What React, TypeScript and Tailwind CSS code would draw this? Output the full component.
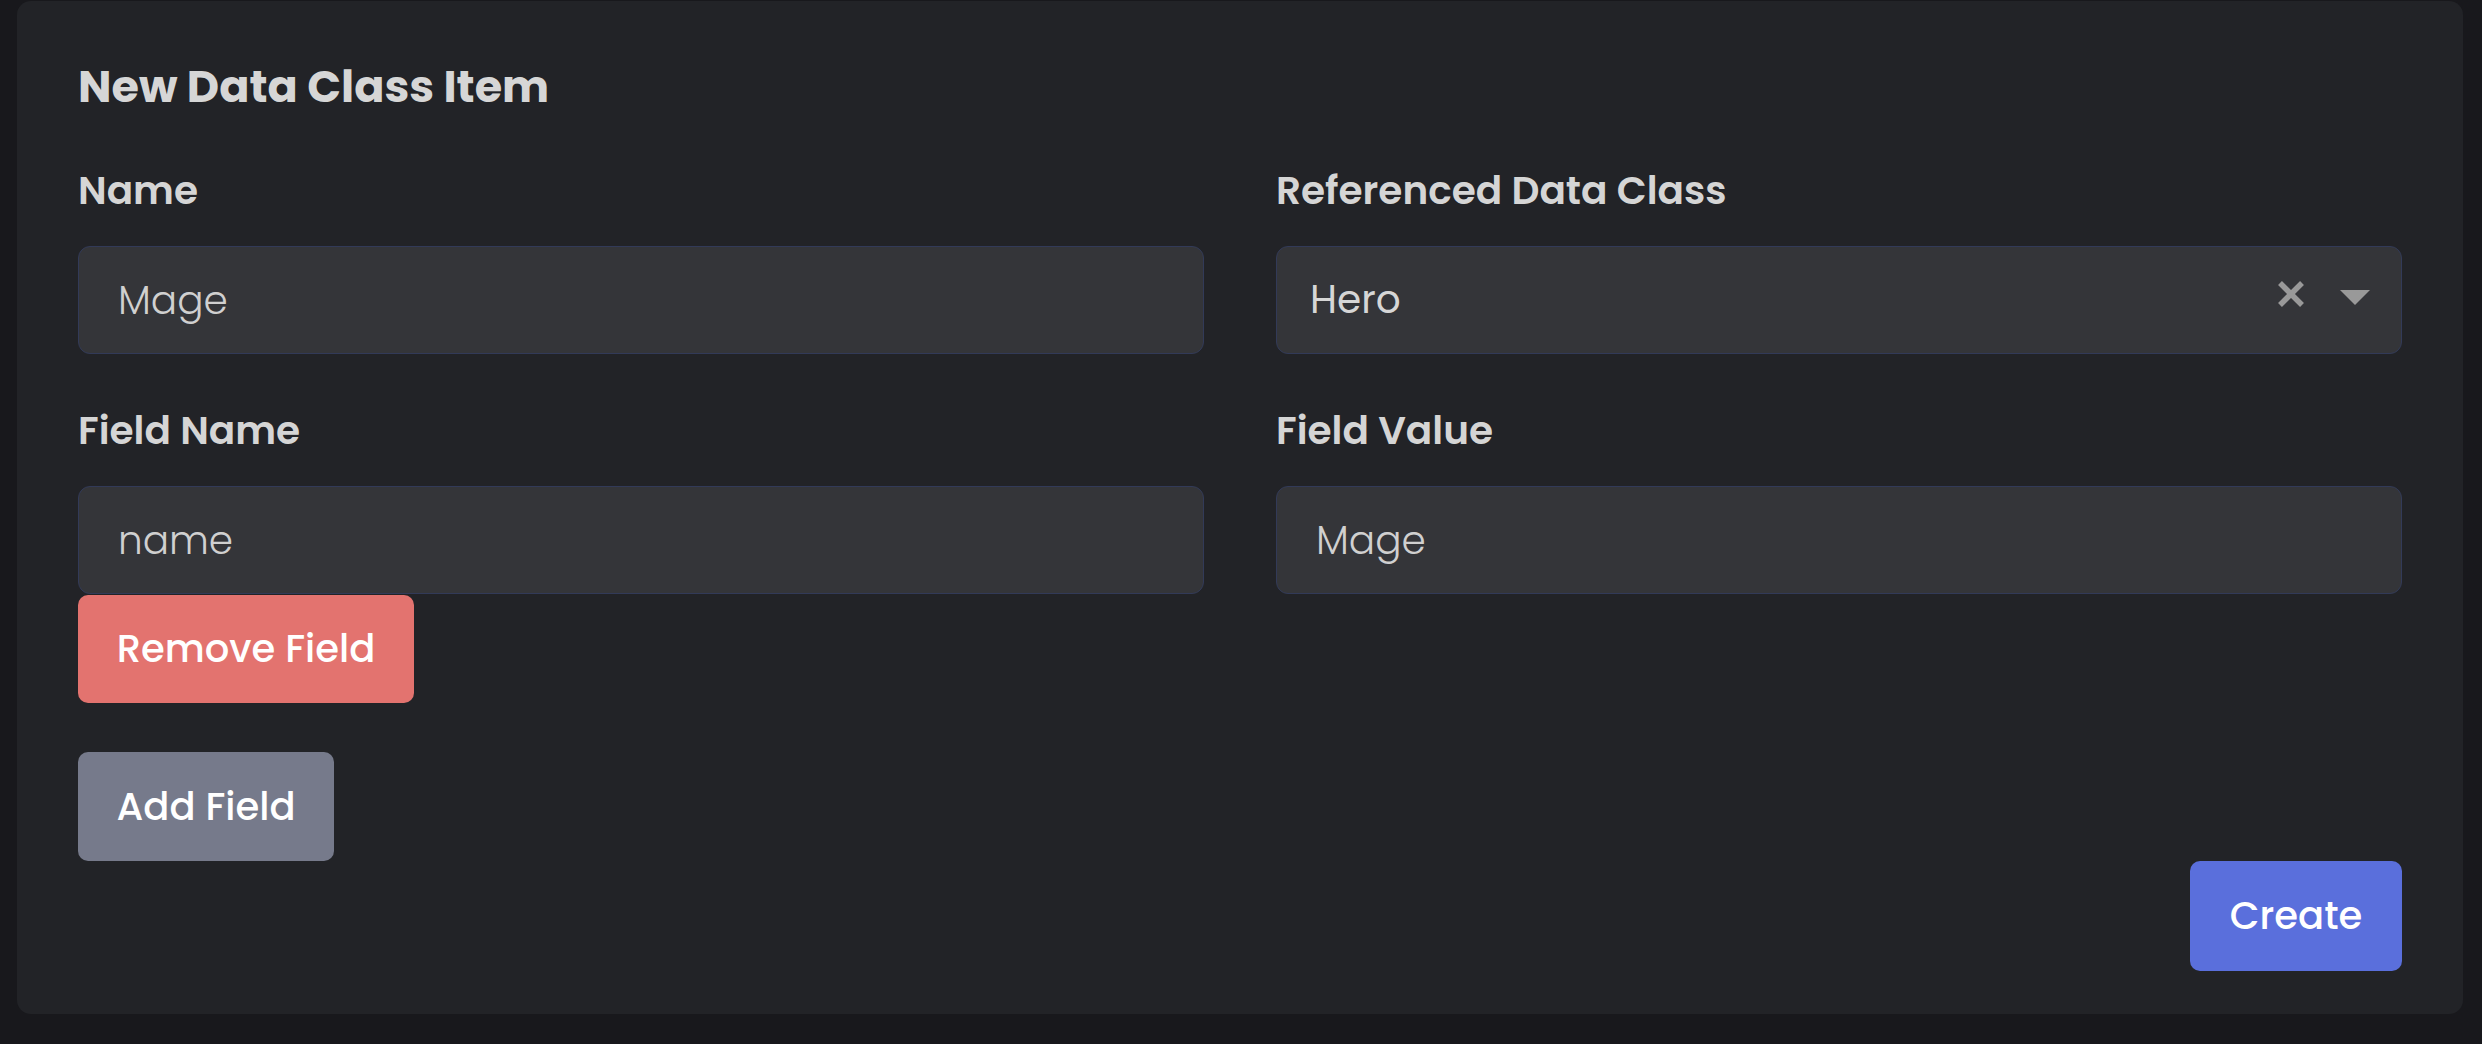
import { useState } from "react";

const fontStack = "font-['Poppins','Inter','Noto_Sans',sans-serif]";

function TextField({ label, value, onChange }: { label: string; value: string; onChange: (v: string) => void }) {
  return (
    <div className="flex flex-col">
      <label className="h-[44px] leading-[44px] text-[39px] font-semibold text-[#d5d5d5]">{label}</label>
      <input
        type="text"
        value={value}
        onChange={(e) => onChange(e.target.value)}
        className="mt-[33px] h-[108px] w-full rounded-[12px] border-[1.5px] border-[#323a58] bg-[#343539] px-[39px] text-[39px] font-light text-[#d0d0d0] outline-none"
      />
    </div>
  );
}

export default function App() {
  const [name, setName] = useState("Mage");
  const [fieldName, setFieldName] = useState("name");
  const [fieldValue, setFieldValue] = useState("Mage");

  return (
    <div className={`min-h-[1044px] w-full bg-[#18181c] pl-[17px] pr-[19px] pt-px ${fontStack}`}>
      <div className="flex h-[1013px] flex-col rounded-[14px] bg-[#222327] px-[61px] pt-[59px]">
        <h2 className="h-[54px] text-[44.5px] leading-[54px] font-bold text-[#d6d6d6]">New Data Class Item</h2>

        <div className="mt-[55px] grid grid-cols-2 gap-x-[72px]">
          <TextField label="Name" value={name} onChange={setName} />

          {/* Select */}
          <div className="flex flex-col">
            <label className="h-[44px] leading-[44px] text-[39px] font-semibold text-[#d5d5d5]">Referenced Data Class</label>
            <div className="mt-[33px] flex h-[108px] items-center rounded-[12px] border-[1.5px] border-[#323a58] bg-[#343539] pl-[33px] pr-[31px]">
              <span className="flex-1 text-[39px] font-normal text-[#d6d6d6]">Hero</span>
              <svg width="26" height="26" viewBox="0 0 26 26" className="-mt-[12px] mr-[36px]">
                <path d="M2 2 L24 24 M24 2 L2 24" stroke="#999999" strokeWidth="5.5" />
              </svg>
              <svg width="30" height="15" viewBox="0 0 30 15" className="-mt-[6px]">
                <polygon points="0,0 30,0 15,15" fill="#999999" />
              </svg>
            </div>
          </div>

          <div className="mt-[55px] flex flex-col">
            <TextField label="Field Name" value={fieldName} onChange={setFieldName} />
            <button className="mt-px h-[108px] w-[336px] rounded-[10px] bg-[#e3736f] text-[38.5px] font-medium text-white">
              Remove Field
            </button>
          </div>
          <div className="mt-[55px]">
            <TextField label="Field Value" value={fieldValue} onChange={setFieldValue} />
          </div>
        </div>

        <div className="mt-[49px]">
          <button className="h-[109px] w-[256px] rounded-[10px] bg-[#767a8b] text-[38.5px] font-medium text-white">
            Add Field
          </button>
        </div>
        <div className="flex justify-end">
          <button className="h-[110px] w-[212px] rounded-[10px] bg-[#5a6fdc] text-[38.5px] font-medium text-white">
            Create
          </button>
        </div>
      </div>
    </div>
  );
}
